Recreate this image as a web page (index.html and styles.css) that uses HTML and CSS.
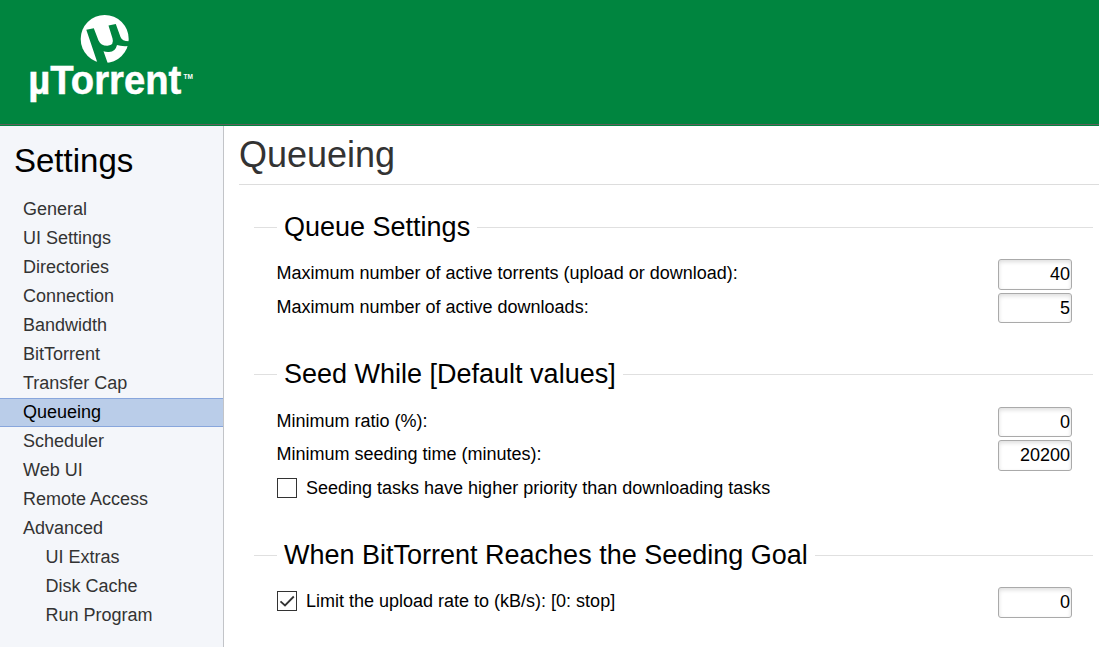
FILE: index.html
```
<!DOCTYPE html>
<html lang="en">
<head>
<meta charset="utf-8">
<title>µTorrent Settings</title>
<link rel="stylesheet" href="styles.css">
</head>
<body>
<header class="header">
  <svg class="logo" width="210" height="124" viewBox="0 0 210 124" role="img" aria-label="µTorrent">
    <circle cx="104.700" cy="39" r="24" fill="#fff"/>
    <path d="M86.300 29.700L93.800 28.200L98.500 40.500Q101 46 107.500 45.800Q114.500 45 112.500 38.500L108.500 25.500L115.800 24L120.500 37Q122 41.500 130 41.200L129 46Q120.500 46.500 117 45Q115.500 51.700 109 52Q106 52.200 103.500 51.300L108 64L98 65L97 61.500Z" fill="#00853f"/>
    <text class="logo-name" transform="translate(28.300 94.200) scale(0.956 1)">µTorrent</text>
    <text class="logo-tm" x="183.500" y="78.500">TM</text>
  </svg>
</header>
<div class="layout">
  <nav class="sidebar">
    <h2 class="sidebar-title">Settings</h2>
    <ul class="menu">
      <li class="item">General</li>
      <li class="item">UI Settings</li>
      <li class="item">Directories</li>
      <li class="item">Connection</li>
      <li class="item">Bandwidth</li>
      <li class="item">BitTorrent</li>
      <li class="item">Transfer Cap</li>
      <li class="item active">Queueing</li>
      <li class="item">Scheduler</li>
      <li class="item">Web UI</li>
      <li class="item">Remote Access</li>
      <li class="item">Advanced</li>
      <li class="item sub">UI Extras</li>
      <li class="item sub">Disk Cache</li>
      <li class="item sub">Run Program</li>
    </ul>
  </nav>
  <main class="content">
    <h1 class="page-title">Queueing</h1>
    <section class="group queue">
      <h3 class="legend">Queue Settings</h3>
      <div class="row"><span class="label">Maximum number of active torrents (upload or download):</span><input class="field" value="40"></div>
      <div class="row"><span class="label">Maximum number of active downloads:</span><input class="field short" value="5"></div>
    </section>
    <section class="group seed">
      <h3 class="legend">Seed While [Default values]</h3>
      <div class="row"><span class="label">Minimum ratio (%):</span><input class="field short" value="0"></div>
      <div class="row pull"><span class="label">Minimum seeding time (minutes):</span><input class="field" value="20200"></div>
      <div class="row"><span class="box"></span><span class="label">Seeding tasks have higher priority than downloading tasks</span></div>
    </section>
    <section class="group goal">
      <h3 class="legend">When BitTorrent Reaches the Seeding Goal</h3>
      <div class="row"><span class="box"><svg width="18" height="18" viewBox="0 0 18 18"><path d="M2.500 9.300L7 13.500L15.800 4.500" fill="none" stroke="#333" stroke-width="1.800"/></svg></span><span class="label">Limit the upload rate to (kB/s): [0: stop]</span><input class="field" value="0"></div>
    </section>
  </main>
</div>
</body>
</html>
```
FILE: styles.css
```
* { box-sizing: border-box; }
body {
  margin: 0;
  height: 647px;
  overflow: hidden;
  background: #fff;
  color: #000;
  font: 18px/20px "Liberation Sans", Arial, sans-serif;
}
h1, h2, h3, ul { margin: 0; padding: 0; font-weight: 400; }
.header {
  height: 126px;
  background: linear-gradient(#00853f 124px, #60605c 124px, #60605c 125px, #00853f 125px);
}
.logo { display: block; }
.logo-name { font-size: 40px; font-weight: 700; fill: #fff; stroke: #fff; stroke-width: 0.5px; }
.logo-tm { font-size: 6.500px; font-weight: 700; fill: #fff; }
.layout { display: flex; height: 521px; }
.sidebar {
  flex: none;
  width: 224px;
  padding-top: 15px;
  background: #f4f6fa;
  border-right: 1px solid #c2c4c8;
}
.sidebar-title { padding-left: 14px; font-size: 33px; line-height: 40px; }
.menu { padding-top: 14px; list-style: none; }
.item { height: 29px; padding-left: 23px; line-height: 29px; color: #333; }
.active {
  line-height: 27px;
  color: #000;
  background: #bacde9;
  border: solid #88a6dc;
  border-width: 1px 0;
}
.sub { padding-left: 45.500px; }
.content { flex: 1; min-width: 0; padding-left: 15px; }
.page-title {
  height: 59px;
  font-size: 36px;
  line-height: 58px;
  color: #333;
  border-bottom: 1px solid #ddd;
}
.group { margin: 0 6px 0 15px; }
.queue { padding-top: 26px; height: 173px; }
.seed { height: 181px; }
.seed .legend { margin-bottom: 16px; }
.goal { height: 100px; }
.legend {
  display: flex;
  align-items: center;
  gap: 7px;
  height: 32px;
  margin-bottom: 15px;
  font-size: 27px;
  line-height: 32px;
  white-space: nowrap;
}
.legend::before, .legend::after { content: ""; height: 1px; background: #e0e0e0; }
.legend::before { width: 23px; }
.legend::after { flex: 1; }
.row {
  display: flex;
  align-items: flex-start;
  height: 34px;
  padding: 1px 21px 0 22.500px;
}
.pull { margin-top: -1px; }
.label { padding-top: 4px; white-space: nowrap; }
.field {
  flex: none;
  width: 74px;
  height: 31px;
  margin: 0 0 0 auto;
  padding: 0 1px;
  border: 1px solid #aaa;
  border-radius: 3px;
  background: #fff;
  box-shadow: inset 0 2px 4px #ddd;
  font: 18px "Liberation Sans", Arial, sans-serif;
  color: #000;
  text-align: right;
}
.short { height: 30px; }
.box {
  flex: none;
  width: 20px;
  height: 20px;
  margin: 4px 9.500px 0 0;
  border: 1px solid #333;
}
.box svg { display: block; }
```
